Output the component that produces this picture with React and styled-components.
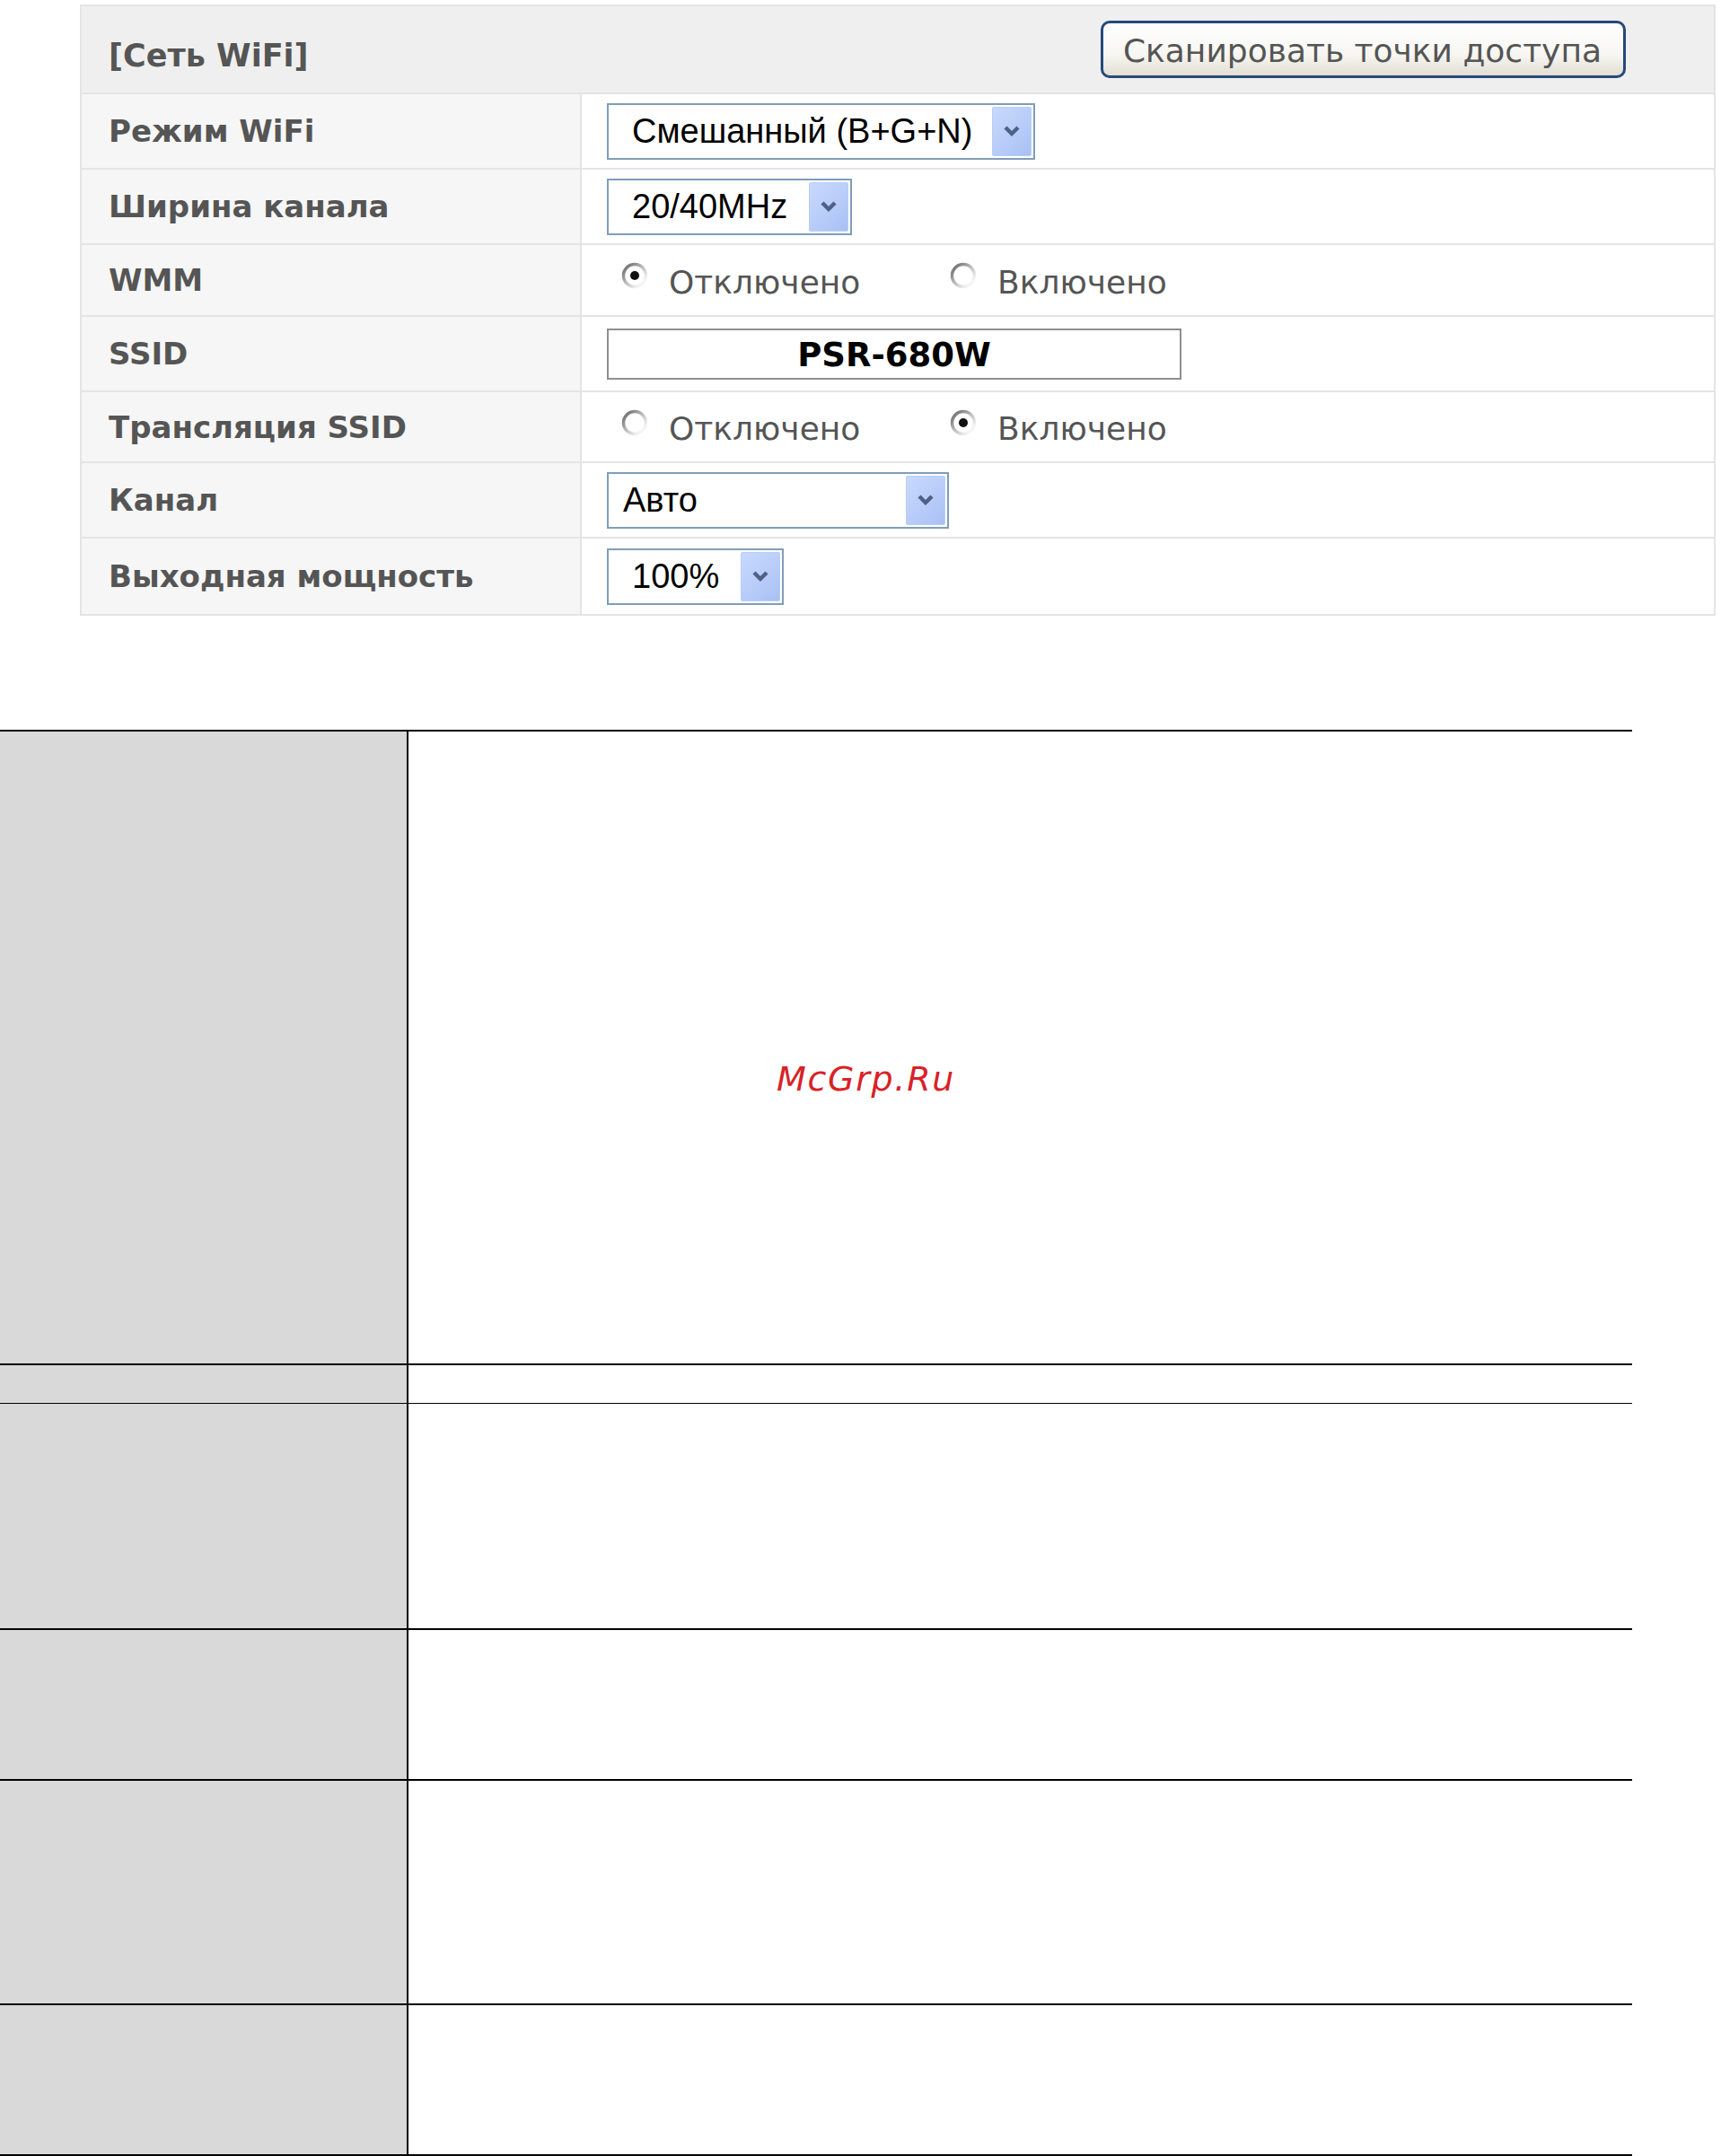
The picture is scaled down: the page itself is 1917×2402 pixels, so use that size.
import React from 'react';
import styled, { createGlobalStyle } from 'styled-components';

const GlobalStyle = createGlobalStyle`
  html, body {
    margin: 0;
    padding: 0;
    background: #ffffff;
  }
  * {
    box-sizing: border-box;
  }
`;

const Page = styled.div`
  position: relative;
  width: 1917px;
  height: 2402px;
  overflow: hidden;
  padding-top: 5px;
  font-family: "DejaVu Sans", Verdana, sans-serif;
`;

// ---- wifi settings panel ----

const Panel = styled.div`
  margin-left: 89px;
  width: 1822px;
  border: 2px solid #e4e4e4;
  background: #f6f6f6;
`;

const HeaderRow = styled.div`
  height: 98px;
  display: flex;
  align-items: center;
  justify-content: space-between;
  padding: 0 98px 0 30px;
  background: #efefef;
  border-bottom: 2px solid #e4e4e4;
`;

const Title = styled.span`
  margin-top: 14px;
  font-weight: bold;
  font-size: 35px;
  color: #555555;
`;

const ScanButton = styled.button`
  height: 64px;
  padding: 3px 24px 0 22px;
  border: 3px solid #25497a;
  border-radius: 10px;
  background: linear-gradient(#ffffff 0%, #f7f6f2 60%, #e2ded2 100%);
  font-family: "DejaVu Sans", Verdana, sans-serif;
  font-size: 36px;
  color: #555555;
  line-height: 1;
`;

const Row = styled.div`
  display: grid;
  grid-template-columns: 555px 1fr;
  height: ${p => p.$h}px;
  border-bottom: ${p => (p.$last ? 'none' : '2px solid #e4e4e4')};
`;

const Label = styled.div`
  display: flex;
  align-items: center;
  padding-left: 30px;
  background: #f6f6f6;
  font-weight: bold;
  font-size: 34px;
  color: #555555;
`;

const Value = styled.div`
  display: flex;
  align-items: center;
  padding-left: 28px;
  background: #ffffff;
  border-left: 2px solid #e4e4e4;
`;

const SelectBox = styled.div`
  display: flex;
  align-items: stretch;
  width: ${p => p.$w}px;
  height: 63px;
  border: 2px solid #7f9db9;
  background: #ffffff;
  padding: 2px;
`;

const SelectText = styled.span`
  flex: 1;
  display: flex;
  align-items: center;
  padding-left: ${p => p.$pad}px;
  font-family: "Liberation Sans", Arial, sans-serif;
  font-size: 38px;
  color: #000000;
  white-space: nowrap;
`;

const ArrowBox = styled.span`
  width: 44px;
  display: flex;
  align-items: center;
  justify-content: center;
  border: 1px solid #b9cdf6;
  border-radius: 2px;
  background: linear-gradient(135deg, #c9d9fc 0%, #b6cbf8 60%, #a9c0f4 100%);
`;

const RadioGroup = styled.div`
  display: flex;
  align-items: center;
  padding-left: 14px;
  margin-top: 4px;
`;

const RadioItem = styled.label`
  display: flex;
  align-items: center;
  width: ${p => p.$w}px;
  font-size: 36px;
  color: #555555;
`;

const RadioMark = styled.svg`
  width: 34px;
  height: 34px;
  margin-right: 21px;
  margin-top: -14px;
  flex: none;
`;

const SsidInput = styled.div`
  width: 640px;
  height: 57px;
  border: 2px solid #8f8f8f;
  background: #ffffff;
  display: flex;
  align-items: center;
  justify-content: center;
  padding-top: 2px;
  font-weight: bold;
  font-size: 37px;
  color: #000000;
`;

// ---- lower table ----

const Table = styled.div`
  margin-top: 127px;
  width: 1818px;
  border-bottom: 2px solid #000000;
`;

const TableRow = styled.div`
  display: grid;
  grid-template-columns: 455px 1fr;
  height: ${p => p.$h}px;
  border-top: ${p => p.$line}px solid #000000;
`;

const KeyCell = styled.div`
  background: #d9d9d9;
  border-right: 2px solid #000000;
`;

const TextCell = styled.div`
  background: #ffffff;
`;

const Watermark = styled.div`
  position: absolute;
  left: 865px;
  top: 1183px;
  font-family: "DejaVu Sans", Verdana, sans-serif;
  font-style: italic;
  font-size: 38px;
  line-height: 1;
  letter-spacing: 1.7px;
  color: #d82226;
`;

function Chevron() {
  return (
    <svg width="20" height="14" viewBox="0 0 20 14">
      <path d="M3 3 L10 10 L17 3" fill="none" stroke="#4d6185" strokeWidth="4.4" strokeLinejoin="miter" />
    </svg>
  );
}

function Select({ width, pad = 24, children }) {
  return (
    <SelectBox $w={width}>
      <SelectText $pad={pad}>{children}</SelectText>
      <ArrowBox><Chevron /></ArrowBox>
    </SelectBox>
  );
}

function Radio({ checked, width, children }) {
  return (
    <RadioItem $w={width}>
      <RadioMark viewBox="0 0 34 34">
        <defs>
          <linearGradient id="ring" x1="0" y1="0" x2="1" y2="1">
            <stop offset="0" stopColor="#5f5f5f" />
            <stop offset="0.45" stopColor="#b8b8b8" />
            <stop offset="0.8" stopColor="#f2f2f2" />
            <stop offset="1" stopColor="#ffffff" />
          </linearGradient>
        </defs>
        <circle cx="17" cy="17" r="12.5" fill="#ffffff" stroke="url(#ring)" strokeWidth="3.5" />
        {checked && <circle cx="17" cy="17" r="5" fill="#111111" />}
      </RadioMark>
      {children}
    </RadioItem>
  );
}

const rows = [
  { label: 'Режим WiFi', h: 84, value: <Select width={477}>Смешанный (B+G+N)</Select> },
  { label: 'Ширина канала', h: 84, value: <Select width={273}>20/40MHz</Select> },
  {
    label: 'WMM', h: 80, value: (
      <RadioGroup>
        <Radio checked width={366}>Отключено</Radio>
        <Radio>Включено</Radio>
      </RadioGroup>
    )
  },
  { label: 'SSID', h: 84, value: <SsidInput>PSR-680W</SsidInput> },
  {
    label: 'Трансляция SSID', h: 79, value: (
      <RadioGroup>
        <Radio width={366}>Отключено</Radio>
        <Radio checked>Включено</Radio>
      </RadioGroup>
    )
  },
  { label: 'Канал', h: 84, value: <Select width={381} pad={14}>Авто</Select> },
  { label: 'Выходная мощность', h: 84, value: <Select width={197}>100%</Select> },
];

const tableRows = [
  { h: 706, line: 2 },
  { h: 44, line: 2 },
  { h: 251, line: 1 },
  { h: 168, line: 2 },
  { h: 250, line: 2 },
  { h: 168, line: 2 },
];

export default function App() {
  return (
    <Page>
      <GlobalStyle />
      <Panel>
        <HeaderRow>
          <Title>[Сеть WiFi]</Title>
          <ScanButton>Сканировать точки доступа</ScanButton>
        </HeaderRow>
        {rows.map((r, i) => (
          <Row key={r.label} $h={r.h} $last={i === rows.length - 1}>
            <Label>{r.label}</Label>
            <Value>{r.value}</Value>
          </Row>
        ))}
      </Panel>
      <Table>
        {tableRows.map((r, i) => (
          <TableRow key={i} $h={r.h} $line={r.line}>
            <KeyCell />
            <TextCell />
          </TableRow>
        ))}
      </Table>
      <Watermark>McGrp.Ru</Watermark>
    </Page>
  );
}
